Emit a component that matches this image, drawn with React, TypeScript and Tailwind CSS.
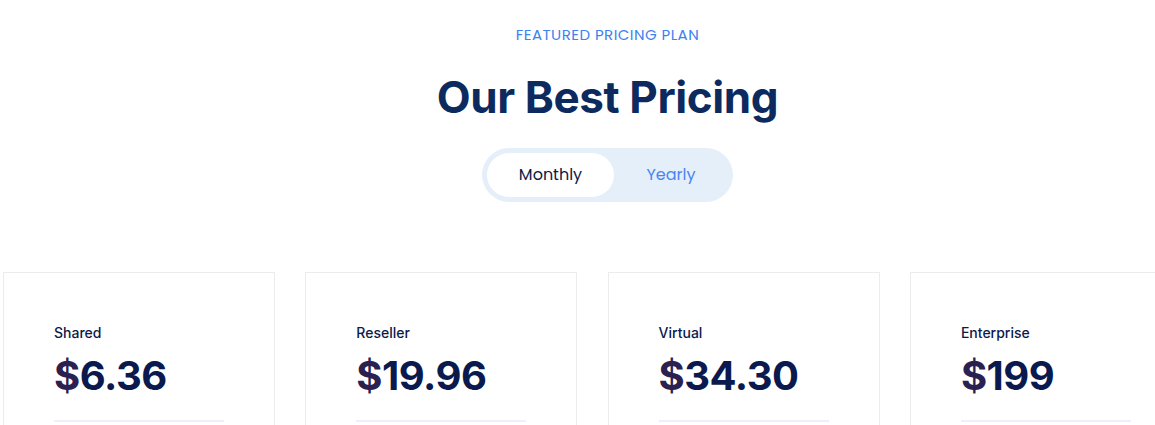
const plans = [
  { name: "Shared", price: "6.36" },
  { name: "Reseller", price: "19.96" },
  { name: "Virtual", price: "34.30" },
  { name: "Enterprise", price: "199" },
];

export default function App() {
  return (
    <div className="w-[1155px] h-[425px] overflow-hidden bg-white">
      <div className="w-[1215px] pt-[25px]">
        <div className="flex flex-col items-center font-['Poppins','Inter',sans-serif]">
          <p className="text-[15px] leading-[20px] text-[#3d82f0] uppercase tracking-[0.45px]">
            Featured Pricing Plan
          </p>
          <h1 className="mt-[28px] text-[44px] leading-[48px] font-bold text-[#0d2a5e] font-['Inter',sans-serif] tracking-[-0.4px]">
            Our Best Pricing
          </h1>
          <div className="mt-[27px] flex items-center p-[5px] rounded-full bg-[#e4effa] w-[251px] h-[54px]">
            <button className="w-[127px] h-[44px] rounded-full bg-white text-[16px] text-[#0b1a4a]">
              Monthly
            </button>
            <button className="flex-1 h-[44px] text-[16px] text-[#4a84f2]">Yearly</button>
          </div>
        </div>

        {/* Plans */}
        <div className="mt-[70px] pl-[3px] flex gap-[30.3px]">
          {plans.map((p) => (
            <div
              key={p.name}
              className="w-[272px] shrink-0 h-[200px] border border-[#ececec] pt-[50px] px-[50px] font-['Inter',sans-serif]"
            >
              <h3 className="text-[14px] leading-[20px] font-medium text-[#0b1a4a]">{p.name}</h3>
              <div className="mt-[9px] text-[40px] leading-[48px] font-bold text-[#0a1a4e] tracking-[-0.5px]">
                <span className="text-[#2b2150]">$</span>
                {p.price}
              </div>
              <div className="mt-[20px] h-[2px] w-[170px] bg-[#eeeefc]" />
            </div>
          ))}
        </div>
      </div>
    </div>
  );
}
